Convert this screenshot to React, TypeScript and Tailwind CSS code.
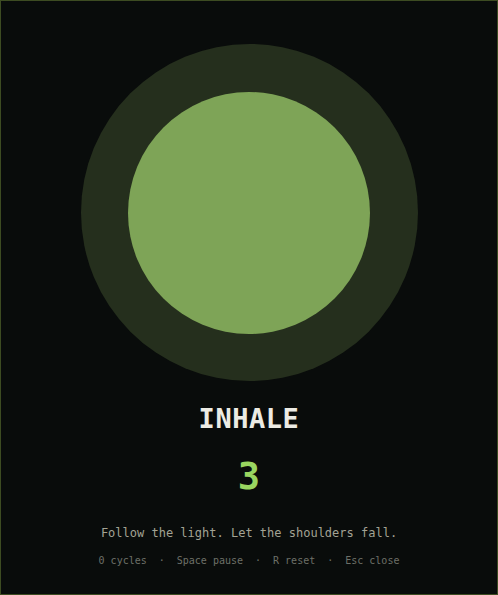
export default function App() {
  const hints = ["0 cycles", "Space pause", "R reset", "Esc close"];

  return (
    <div
      className="h-[595px] w-full border border-[#3d4c22] bg-[#090c0b] flex flex-col items-center"
      style={{ fontFamily: '"DejaVu Sans Mono", "Liberation Mono", monospace' }}
    >
      {/* breathing orb */}
      <div className="mt-[43px] w-[337px] h-[337px] rounded-full bg-[#252f1d] flex items-center justify-center">
        <div className="w-[242px] h-[242px] rounded-full bg-[#7ea457]" />
      </div>

      <div className="mt-[20px] text-[27px] leading-[36px] font-bold tracking-[0.02em] text-[#ecebe4]">
        INHALE
      </div>

      <div className="mt-[18px] text-[37px] leading-[44px] font-bold text-[#99d660]">3</div>

      <p className="mt-[26px] text-[12px] leading-[16px] text-[#a3a394]">
        Follow the light. Let the shoulders fall.
      </p>

      <div className="mt-[13px] flex items-center text-[10px] leading-[14px] text-[#6d7068]">
        {hints.map((h, i) => (
          <div key={h} className="flex items-center">
            {i > 0 && <span className="mx-[12px]">·</span>}
            <span>{h}</span>
          </div>
        ))}
      </div>
    </div>
  );
}
